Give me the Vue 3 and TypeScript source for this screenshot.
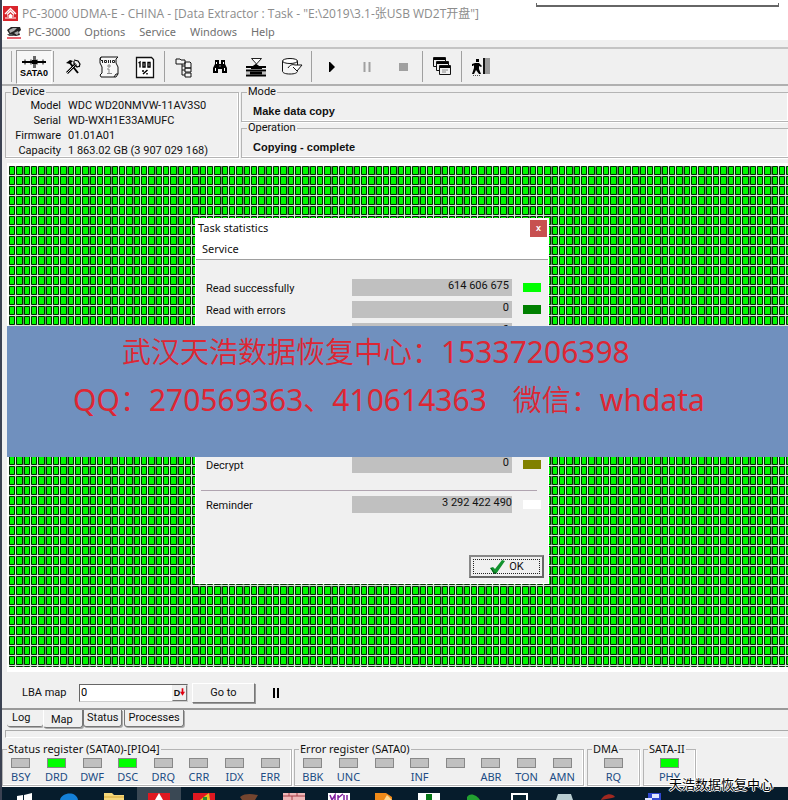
<script setup lang="ts">
import { ref } from 'vue'

interface StatRow { label: string; value: string; color: string }
interface Flag { name: string; on?: boolean }
interface Group { title: string; kind: string; flags: Flag[] }

const menus: string[] = ['PC-3000', 'Options', 'Service', 'Windows', 'Help']
const device: [string, string][] = [
  ['Model', 'WDC WD20NMVW-11AV3S0'],
  ['Serial', 'WD-WXH1E33AMUFC'],
  ['Firmware', '01.01A01'],
  ['Capacity', '1 863.02 GB (3 907 029 168)'],
]
const upperRows: StatRow[] = [
  { label: 'Read successfully', value: '614 606 675', color: '#00ff00' },
  { label: 'Read with errors', value: '0', color: '#008000' },
  { label: '', value: '0', color: 'transparent' },
]
const lowerRows: StatRow[] = [
  { label: '', value: '', color: 'transparent' },
  { label: 'Decrypt', value: '0', color: '#808000' },
]
const tabs: string[] = ['Log', 'Map', 'Status', 'Processes']
const activeTab = ref('Map')
const lba = ref('0')
const groups: Group[] = [
  {
    title: 'Status register (SATA0)-[PIO4]', kind: 'wide',
    flags: [{ name: 'BSY' }, { name: 'DRD', on: true }, { name: 'DWF' }, { name: 'DSC', on: true }, { name: 'DRQ' }, { name: 'CRR' }, { name: 'IDX' }, { name: 'ERR' }],
  },
  {
    title: 'Error register (SATA0)', kind: 'wide',
    flags: [{ name: 'BBK' }, { name: 'UNC' }, { name: '' }, { name: 'INF' }, { name: '' }, { name: 'ABR' }, { name: 'TON' }, { name: 'AMN' }],
  },
  { title: 'DMA', kind: 'narrow', flags: [{ name: 'RQ' }] },
  { title: 'SATA-II', kind: 'narrow', flags: [{ name: 'PHY', on: true }] },
]
</script>

<template>
  <div class="app">
    <header class="head">
      <div class="title">
        <svg class="logo" viewBox="0 0 15 15"><rect width="15" height="15" fill="#d9252c" /><path d="M2 8 7.500 2.500 13 8M4 8.500 7.500 5 11 8.500" fill="none" stroke="#fff" stroke-width="1.300" /><path d="M2 12h11M4 10h7" stroke="#fff" stroke-width="1" /><path d="M6 12V9l1.500-1.500L9 9v3z" fill="#fff" /></svg>
        <span>PC-3000 UDMA-E - CHINA - [Data Extractor : Task - "E:\2019\3.1-张USB WD2T开盘"]</span>
      </div>
      <nav class="menu">
        <svg class="disk" viewBox="0 0 14 13"><path d="M0 4 4 1h9l1 3-2 2 1 3-4 1-6-1z" fill="#222" /><path d="M2 4 6 2h4l-3 3-4 2zM7 7l4-2 1 2-2 2z" fill="#aaa" /><path d="M0 8h5l2 2H2z" fill="#555" /><path d="M0 12h14" stroke="#e03040" stroke-width="1.500" /></svg>
        <button v-for="m in menus" :key="m" type="button">{{ m }}</button>
      </nav>
    </header>

    <div class="toolbar">
      <i class="grip"></i>
      <button type="button" class="sata" aria-label="SATA0">
        <svg viewBox="0 0 26 12"><path d="M1 6h24" stroke="#000" stroke-width="2" /><path d="M4 3.500v5M22 3.500v5M10 3.500v5M16 3.500v5" stroke="#000" stroke-width="1" /><path d="M12 0h3v12h-3z" fill="#666" /><path d="M11 4h5v4h-5z" /></svg>
        <span>SATA0</span>
      </button>
      <i class="sep"></i>
      <button type="button" aria-label="Tools">
        <svg viewBox="0 0 26 26"><path d="M6 9l4-3 3 1-3 3z" fill="#000" /><path d="M10 9l8 10" stroke="#000" stroke-width="2" /><path d="M7 19l9-9" stroke="#000" stroke-width="2.600" /><path d="M7 19l9-9" stroke="#ddd" stroke-width="1" /><path d="M14 6l4 1 2 3-1 3M14 7v3l3 3 3-1" fill="none" stroke="#000" stroke-width="1.200" /></svg>
      </button>
      <button type="button" aria-label="Script">
        <svg viewBox="0 0 26 26"><path d="M5 3h17l-2 2v4l2 4v7l-2 3H5l-1-2 2-2v-6L4 9V5z" fill="#f8f8f8" stroke="#111" /><path d="M18 23l2-3h2M5 3 4 5l2 2" fill="none" stroke="#111" /><path d="M6.500 6v3M8.500 6.500h2v2h-2zM12.500 6v3M14.500 6v3M16.500 6.500h2v2h-2z" fill="none" stroke="#222" /><path d="M12 11h2v2h-2zM11 15h2v4M11 19.500h5" fill="none" stroke="#888" /></svg>
      </button>
      <button type="button" aria-label="Progress report">
        <svg viewBox="0 0 26 26"><path d="M4.500 3.500h15l2 2v18h-17z" fill="#fff" stroke="#111" stroke-width="1.300" /><path d="M6.500 9l1.500-1v5.500M11 8.500h2v4.500h-2zM16 8.500h2v4.500h-2z" fill="none" stroke="#000" stroke-width="1.400" /><path d="M11 16v2M15.500 16 11 20M15 19v1.500" stroke="#000" stroke-width="1.500" /></svg>
      </button>
      <i class="sep"></i>
      <button type="button" aria-label="Tree">
        <svg viewBox="0 0 26 26"><path d="M5 5h4l1 1h4v4H5zM14 8h5l1 1v5h-6zM14 14h6v4h-6zM14 19h6v4h-6z" fill="#f5f5f5" stroke="#111" /><path d="M11 10v11h3M11 12h3M11 16h3" fill="none" stroke="#111" /></svg>
      </button>
      <button type="button" aria-label="Search">
        <svg viewBox="0 0 26 26"><path d="M8 6h4v4h2V6h4v4l2 4v5h-5v-4h-4v4H6v-5l2-4z" fill="#000" /><path d="M9.500 8v2M8.500 14v3M16.500 8v2M17.500 14v3" stroke="#fff" /><path d="M12.500 12h1" stroke="#fff" /></svg>
      </button>
      <button type="button" aria-label="Load map">
        <svg viewBox="0 0 26 26"><path d="M8.500 4.500h10L13.500 10z" fill="#fff" stroke="#222" /><path d="M3 13h7l3-2 3 2h7M3 16.500h20M3 21.500h20" stroke="#000" stroke-width="2" fill="none" /><path d="M8 13.500h11M7 19h12" stroke="#000" stroke-width="3" /><path d="M3 19h4M19 19h4" stroke="#888" /></svg>
      </button>
      <button type="button" aria-label="Save to disk">
        <svg viewBox="0 0 26 26"><path d="M3.500 7v10c0 2 3 3 7.500 3s7.500-1 7.500-3V7" fill="#f5f5f5" stroke="#111" /><ellipse cx="11" cy="7" rx="7.500" ry="2.500" fill="#fff" stroke="#111" /><path d="M9 14c2-3 4-4 7-3h7l-5 6-4-4" fill="#fff" stroke="#111" /></svg>
      </button>
      <i class="sep"></i>
      <button type="button" aria-label="Start"><svg viewBox="0 0 26 26"><path d="M11 8h1l5 5-5 5h-1z" /></svg></button>
      <button type="button" aria-label="Pause"><svg viewBox="0 0 26 26"><path d="M10.500 8v10M15.500 8v10" stroke="#a0a0a0" stroke-width="2" /></svg></button>
      <button type="button" aria-label="Stop"><svg viewBox="0 0 26 26"><path d="M9 9h9v8H9z" fill="#a0a0a0" /></svg></button>
      <i class="sep"></i>
      <button type="button" aria-label="Windows">
        <svg viewBox="0 0 26 26"><g fill="#f0f0f0" stroke="#111"><path d="M4.500 3.500h12v9h-12z" /><path d="M7.500 7.500h12v9h-12z" /><path d="M10.500 11.500h11v9h-11z" /></g><path d="M5 5h11M8 9h11M11 13h10" stroke="#000" stroke-width="2" /><path d="M13 16h6M13 18h4" stroke="#888" /></svg>
      </button>
      <i class="sep"></i>
      <button type="button" aria-label="Exit">
        <svg viewBox="0 0 26 26"><path d="M8 5h3v3H8zM7 9h4l3 3-1 1-2-1v3l2 5h-2l-3-4-2 4H4l2-6v-3l-1 1H4v-2z" fill="#000" /><path d="M15 4h2v16h-2z" fill="#111" /><path d="M17 4h5v16h-5z" fill="#999" /><path d="M5 21.500h8" stroke="#555" stroke-dasharray="1 1" /></svg>
      </button>
    </div>

    <section class="info">
      <fieldset class="box device">
        <legend>Device</legend>
        <dl>
          <template v-for="[k, v] in device" :key="k"><dt>{{ k }}</dt><dd>{{ v }}</dd></template>
        </dl>
      </fieldset>
      <div class="modes">
        <fieldset class="box"><legend>Mode</legend><strong>Make data copy</strong></fieldset>
        <fieldset class="box"><legend>Operation</legend><strong>Copying - complete</strong></fieldset>
      </div>
    </section>

    <main class="map">
      <svg class="cells" aria-label="Sector map">
        <defs>
          <pattern id="cell" width="22" height="10" patternUnits="userSpaceOnUse">
            <rect width="22" height="10" fill="#d6e6d6" />
            <path d="M14 0h1v9h-1z" fill="#6f8a6f" />
            <g fill="#00fa00" stroke="#032a03"><path d="M.5 .5h5v8h-5z" /><path d="M7.500 .5h6v8h-6z" /><path d="M15.500 .5h5v8h-5z" /></g>
          </pattern>
        </defs>
        <rect width="100%" height="100%" fill="url(#cell)" />
      </svg>

      <section class="dialog" role="dialog" aria-label="Task statistics">
        <header>
          <div class="bar"><span>Task statistics</span><button type="button" class="close">x</button></div>
          <button type="button" class="service">Service</button>
        </header>
        <div class="stats">
          <div v-for="(r, i) in upperRows" :key="i" class="row"><span>{{ r.label }}</span><output>{{ r.value }}</output><i :style="{ background: r.color }"></i></div>
        </div>
        <div class="stats lower">
          <div v-for="(r, i) in lowerRows" :key="i" class="row"><span>{{ r.label }}</span><output>{{ r.value }}</output><i :style="{ background: r.color }"></i></div>
        </div>
        <hr>
        <div class="row total"><span>Reminder</span><output>3 292 422 490</output><i></i></div>
        <footer>
          <button type="button" class="ok"><svg viewBox="0 0 16 14"><path d="M1 8l3-1 2 2L13 0l3 1L7 14H5z" fill="#12922e" /><path d="M2 8l3 5h2" fill="none" stroke="#055a18" /></svg>OK</button>
        </footer>
      </section>

      <div class="banner">
        <p>武汉天浩数据恢复中心：<b>15337206398</b></p>
        <p class="second"><b>QQ</b>：<b>270569363</b>、<b>410614363</b><span>微信：</span><b>whdata</b></p>
      </div>
    </main>

    <form class="goto" @submit.prevent>
      <label for="lba">LBA map</label>
      <div class="field"><input id="lba" v-model="lba" type="text"><button type="button">D<svg viewBox="0 0 6 10"><path d="M2 0h2v4h2L3 9 0 4h2z" fill="#e00010" /></svg></button></div>
      <button type="submit" class="go">Go to</button>
      <button type="button" class="hold" aria-label="Hold"><svg viewBox="0 0 8 10"><path d="M1 0h2v10H1zM5 0h2v10H5z" /></svg></button>
    </form>

    <div class="tabs">
      <button v-for="t in tabs" :key="t" type="button" :class="{ active: t === activeTab }" @click="activeTab = t">{{ t }}</button>
    </div>
    <div class="strip"></div>

    <section class="registers">
      <fieldset v-for="g in groups" :key="g.title" class="box" :class="g.kind">
        <legend>{{ g.title }}</legend>
        <div class="flags">
          <div v-for="(f, i) in g.flags" :key="i" class="flag"><i :class="{ on: f.on }"></i><span>{{ f.name }}</span></div>
        </div>
      </fieldset>
    </section>

    <footer class="taskbar">
      <div><svg viewBox="0 0 24 7"><path d="M5 3l6-1v5H5zM12 2l8-2v7h-8z" fill="#fff" /></svg></div>
      <div><svg viewBox="0 0 24 7"><path d="M3 7C4 0 19-3 21 7z" fill="#1480d8" /></svg></div>
      <div><svg viewBox="0 0 24 7"><path d="M2 0h8l2 2h10v5H2z" fill="#f5d77a" /><path d="M2 4h20" stroke="#d8a93a" /></svg></div>
      <div class="current"><svg viewBox="0 0 24 7"><path d="M1 0h22v7H1z" fill="#e01820" /><path d="M12 0l4 7H8z" fill="#fff" /></svg></div>
      <div><svg viewBox="0 0 24 7"><path d="M1 0h22v7H1z" fill="#e01820" /><path d="M8 7l5-4 4-3 1 7z" fill="#e8c020" /><path d="M11 4h4v3h-4z" fill="#289030" /></svg></div>
      <div><svg viewBox="0 0 24 7"><path d="M3 4c5-4 12-3 18-2l-3 5H5z" fill="#74452f" /></svg></div>
      <div><svg viewBox="0 0 24 7"><path d="M1 0h22v7H1z" fill="#efb7b7" /><path d="M1 3h22M7 0v3M15 0v3M10 3v4" stroke="#a84048" /></svg></div>
      <div><svg viewBox="0 0 24 7"><path d="M1 0h22v7H1z" fill="#fff" /><path d="M3 2l2 5 3-5v5M11 2v5M11 5l5-4M17 2v5M20 2v5" fill="none" stroke="#8020a0" stroke-width="1.500" /></svg></div>
      <div><svg viewBox="0 0 24 7"><path d="M3 0h11l6 4v3H3z" fill="#f08a18" /><path d="M12 7l3-5 5 5z" fill="#ffd890" /></svg></div>
      <div><svg viewBox="0 0 24 7"><path d="M1 0h22v7H1z" fill="#fff" /><path d="M9 1h6v6H9z" fill="#087818" /></svg></div>
      <div><svg viewBox="0 0 24 7"><path d="M5 4c3-5 10-2 13 3H5z" fill="#22a030" /></svg></div>
      <div><svg viewBox="0 0 24 7"><path d="M5 7V1h15v6" fill="#06202e" stroke="#fff" stroke-width="2" /></svg></div>
      <div><svg viewBox="0 0 24 7"><path d="M6 1h13l2 6H4z" fill="#b8ccd0" /></svg></div>
      <div><svg viewBox="0 0 24 7"><path d="M4 7c2-6 11-8 14-3l-3 1z" fill="#a02820" /></svg></div>
      <div><svg viewBox="0 0 24 7"><path d="M6 0h13v7H6z" fill="#3048d0" /><path d="M3 5h7v2H3zM10 1h7v4h-7z" fill="#dfe6ff" /></svg></div>
    </footer>
    <div class="corner"></div>
    <div class="mark">天浩数据恢复中心</div>
  </div>
</template>

<style>
body { margin: 0; background: #f0f0f0; }
</style>

<style scoped>
* { box-sizing: border-box; }
.app { position: relative; display: flex; flex-direction: column; height: 100vh; overflow: hidden; border-left: 2px solid #3b4252; background: #f0f0f0; color: #111; font: 11px/14px Roboto, "Liberation Sans", "Noto Sans CJK SC", sans-serif; }
button { padding: 0; border: 0; background: none; color: inherit; font: inherit; }
p, dl, dd { margin: 0; }
svg { flex: none; display: block; }
.head { padding: 4px 0 0; height: 40px; background: #fff; color: #707070; font: 12px/18px "Noto Sans", "Noto Sans CJK SC", sans-serif; }
.title { display: flex; align-items: center; gap: 4px; height: 19px; padding-left: 1px; color: #8c8c8c; font-family: "Open Sans", "Noto Sans CJK SC", sans-serif; white-space: nowrap; }
.logo { width: 15px; height: 15px; }
.menu { display: flex; align-items: center; gap: 14px; height: 18px; padding-left: 5px; font-size: 11px; }
.disk { width: 14px; height: 13px; margin-right: -7px; }
.corner { position: absolute; top: 3px; right: 9px; width: 243px; height: 4px; border: solid #666; border-width: 0 1px 2px; }
.toolbar { display: flex; align-items: center; height: 39px; margin-top: 7px; padding-left: 7px; border-top: 2px solid #c4c4c4; border-bottom: 2px solid #b0b0b0; }
.toolbar button { display: flex; align-items: center; justify-content: center; flex: none; width: 36px; height: 34px; }
.toolbar button svg { width: 26px; height: 26px; }
.toolbar .sata { flex-direction: column; border: 1px solid; border-color: #999 #fff #fff #999; background: #f6f6f6; font: bold 9px/10px "Liberation Sans", sans-serif; color: #000; }
.toolbar .sata svg { height: 12px; }
.grip { width: 3px; height: 31px; margin-right: 4px; border: solid #aaa; border-width: 0 1px 0 0; }
.sep { width: 1px; height: 31px; margin: 0 1px; background: #a0a0a0; }
.box { min-width: 0; margin: 0; padding: 0; border: 1px solid #b4b4b4; box-shadow: inset -1px -1px #fff, 1px 1px #fff; }
.box legend { margin-left: 5px; padding: 0 1px; line-height: 12px; }
.info { display: flex; gap: 2px; height: 72px; padding: 0 0 0 3px; }
.info .device { width: 234px; height: 72px; }
.device dl { display: grid; grid-template-columns: 54px 1fr; column-gap: 7px; grid-auto-rows: 15px; line-height: 15px; padding-left: 1px; }
.device dt { text-align: right; white-space: nowrap; }
.device dd { white-space: nowrap; }
.modes { flex: 1; display: grid; grid-template-rows: 36px 36px; }
.modes .box { border-right: 0; }
.modes strong { display: block; padding: 6px 0 0 11px; font: bold 11px/14px "Liberation Sans", sans-serif; }
.map { position: relative; flex: 1; min-height: 0; margin: 5px 0 5px 5px; padding: 3px 0 5px 2px; background: #fff; }
.cells { width: 100%; height: 100%; }
.dialog { position: absolute; left: 188px; top: 55px; width: 354px; border: 1px solid #fff; background: #f0f0f0; }
.dialog header { display: flow-root; height: 41px; background: #fff; border-bottom: 1px solid #a0a0a0; font: 11px/16px "Noto Sans", sans-serif; }
.bar { display: flex; justify-content: space-between; padding: 1px 1px 0 2px; height: 19px; }
.close { width: 17px; height: 17px; background: #c75050; color: #fff; font: bold 9px/15px "Liberation Sans", sans-serif; }
.service { display: block; padding: 3px 0 0 6px; }
.stats { display: grid; gap: 6px; padding-top: 19px; }
.stats.lower { padding-top: 95px; }
.row { display: grid; grid-template-columns: 146px 160px 11px 18px; height: 16px; padding-left: 10px; }
.row span { padding-top: 3px; white-space: nowrap; }
.row output { background: #c0c0c0; text-align: right; padding-right: 3px; line-height: 14px; }
.row i { grid-column: 4; height: 9px; margin: 4px 0 0; }
hr { margin: 18px 11px 5px 5px; border: 0; border-top: 1px solid #b0a4b0; }
.total output { padding-right: 0; }
.total i { background: #fff; }
.dialog footer { display: flex; justify-content: flex-end; padding: 43px 4px 5px; }
.ok { display: flex; align-items: center; justify-content: center; gap: 4px; width: 75px; height: 23px; border: 2px solid; border-color: #888 #666 #666 #888; outline: 1px dotted #222; outline-offset: -5px; }
.ok svg { width: 16px; height: 14px; }
.banner { position: absolute; left: 0; right: 0; top: 163px; height: 131px; background: #7090be; color: #de2633; font: 29px/48px "Noto Sans CJK SC", sans-serif; font-weight: 350; white-space: nowrap; }
.banner p { padding-left: 115px; height: 48px; }
.banner .second { padding-left: 66px; }
.banner b { font: 30px/48px "Noto Sans", sans-serif; }
.banner span { margin-left: 26px; }
.goto { display: flex; align-items: center; height: 33px; padding-left: 20px; border-bottom: 2px solid #999; }
.goto label { width: 57px; }
.field { display: flex; width: 109px; height: 18px; border: 1px solid; border-color: #666 #ccc #ccc #666; background: #fff; }
.field input { flex: 1; min-width: 0; padding: 0 1px; border: 0; outline: 0; background: none; font: inherit; }
.field button { display: flex; align-items: center; justify-content: center; width: 15px; border: 1px solid; border-color: #eee #777 #777 #eee; background: #f0f0f0; font: bold 9px/10px "Liberation Sans", sans-serif; }
.field svg { width: 5px; height: 9px; }
.go { width: 63px; height: 20px; margin: 0 17px 0 4px; border: 1px solid; border-color: #fff #777 #777 #fff; box-shadow: 1px 1px #999; }
.hold svg { width: 8px; height: 10px; }
.tabs { display: flex; align-items: flex-start; height: 20px; padding-left: 5px; }
.tabs button { height: 17px; padding: 0 3px; border: 1px solid #777; border-top: 0; border-radius: 0 0 3px 3px; box-shadow: 1px 1px #aaa; margin-right: 2px; }
.tabs button:first-child { width: 36px; margin-right: 0; padding: 0 14px 0 5px; border-left: 0; border-right: 0; }
.tabs .active { width: 40px; height: 18px; margin-right: 0; padding: 2px 12px 0 7px; border-left-color: #fff; }
.strip { height: 8px; margin-left: 3px; border-top: 1px solid #aaa; border-left: 1px solid #aaa; border-bottom: 1px solid #fff; }
.registers { display: flex; gap: 2px; height: 49px; padding-top: 5px; font: 11px/14px "Noto Sans", sans-serif; }
.registers .box { height: 43px; }
.registers .wide { width: 290px; }
.registers .narrow { width: 53px; margin-left: 1px; }
.registers legend { margin-left: 4px; white-space: nowrap; }
.flags { display: grid; grid-auto-flow: column; grid-auto-columns: 1fr; padding: 3px 0 0; }
.wide .flags { padding-right: 3px; }
.flag { display: flex; flex-direction: column; align-items: center; gap: 2px; color: #204c84; }
.flag i { width: 19px; height: 10px; border: 1px solid #888; background: #c0c0c0; }
.flag .on { background: #00ff00; }
.taskbar { display: grid; grid-template-columns: repeat(15, minmax(0, 44px)); column-gap: 1px; height: 13px; background: #061c2c; margin-left: -2px; padding-left: 2px; }
.taskbar div { display: flex; align-items: flex-end; justify-content: center; }
.taskbar .current { background: #3a4854; }
.taskbar svg { width: 24px; height: 7px; }
.mark { position: absolute; right: 15px; bottom: 7px; color: #000; font: 13px/18px "Noto Sans CJK SC", sans-serif; text-shadow: 1px 0 #fff, -1px 0 #fff, 0 1px #fff, 0 -1px #fff; }
</style>
